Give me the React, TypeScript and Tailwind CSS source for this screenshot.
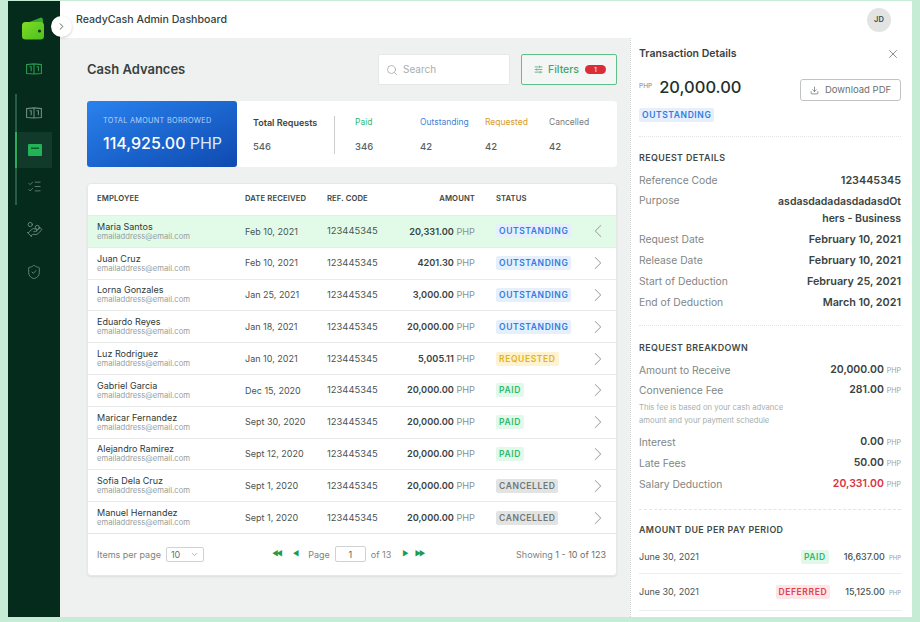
import { ChevronLeft, ChevronRight, ChevronDown, Search, SlidersHorizontal, X, Download, ListChecks, ShieldCheck, HandCoins } from "lucide-react";

type Status = "OUTSTANDING" | "REQUESTED" | "PAID" | "CANCELLED";

const statusStyles: Record<string, string> = {
  OUTSTANDING: "bg-[#e6effc] text-[#2f7de1]",
  REQUESTED: "bg-[#fdf3d0] text-[#e3b21f]",
  PAID: "bg-[#e2f8ea] text-[#2dbb68]",
  CANCELLED: "bg-[#e2e4e3] text-[#6f7674]",
  DEFERRED: "bg-[#fde6e8] text-[#e2404f]",
};

const rows: { name: string; date: string; amount: string; status: Status }[] = [
  { name: "Maria Santos", date: "Feb 10, 2021", amount: "20,331.00", status: "OUTSTANDING" },
  { name: "Juan Cruz", date: "Feb 10, 2021", amount: "4201.30", status: "OUTSTANDING" },
  { name: "Lorna Gonzales", date: "Jan 25, 2021", amount: "3,000.00", status: "OUTSTANDING" },
  { name: "Eduardo Reyes", date: "Jan 18, 2021", amount: "20,000.00", status: "OUTSTANDING" },
  { name: "Luz Rodriguez", date: "Jan 10, 2021", amount: "5,005.11", status: "REQUESTED" },
  { name: "Gabriel Garcia", date: "Dec 15, 2020", amount: "20,000.00", status: "PAID" },
  { name: "Maricar Fernandez", date: "Sept 30, 2020", amount: "20,000.00", status: "PAID" },
  { name: "Alejandro Ramirez", date: "Sept 12, 2020", amount: "20,000.00", status: "PAID" },
  { name: "Sofia Dela Cruz", date: "Sept 1, 2020", amount: "20,000.00", status: "CANCELLED" },
  { name: "Manuel Hernandez", date: "Sept 1, 2020", amount: "20,000.00", status: "CANCELLED" },
];

const stats = [
  { label: "Paid", value: "346", color: "text-[#35b86a]", width: "w-[65px]" },
  { label: "Outstanding", value: "42", color: "text-[#3f7fd8]", width: "w-[65px]" },
  { label: "Requested", value: "42", color: "text-[#d99a2b]", width: "w-[64px]" },
  { label: "Cancelled", value: "42", color: "text-[#777d7b]", width: "w-[50px]" },
];

const gridCols = "grid grid-cols-[148px_82px_70px_78px_21px_95px_15px]";

function Badge({ status, className = "" }: { status: string; className?: string }) {
  return (
    <span className={`inline-block rounded-[2px] px-[3px] text-[8.5px] leading-[14px] font-semibold tracking-[0.6px] ${statusStyles[status]} ${className}`}>
      {status}
    </span>
  );
}

function MoneyIcon({ color }: { color: string }) {
  return (
    <svg width="16" height="12" viewBox="0 0 16 12" fill="none" stroke={color} strokeWidth="1.1">
      <path d="M0.6 1.6 L8 0.9 L15.4 1.6 V10.6 L8 11 L0.6 10.6z" />
      <path d="M8 1v10" />
      <path d="M3.4 3.8h1.8v4.4M10.6 3.8h1.8v4.4" />
    </svg>
  );
}

function Logo() {
  return (
    <svg width="23" height="23" viewBox="0 0 23 23">
      <defs>
        <linearGradient id="walletBody" x1="0" y1="0" x2="1" y2="1">
          <stop offset="0" stopColor="#7fdc24" />
          <stop offset="1" stopColor="#4cc020" />
        </linearGradient>
      </defs>
      <path d="M5 6 L19 0.5 Q21 0.5 21 3 V7 H5z" fill="#37a835" />
      <rect x="0" y="5" width="22" height="17.5" rx="3.5" fill="url(#walletBody)" />
      <circle cx="17.5" cy="14" r="1.6" fill="#123a1c" />
    </svg>
  );
}

function Sidebar() {
  return (
    <aside className="relative flex w-[52px] shrink-0 flex-col items-center bg-[#042b1c]">
      <div className="mt-[16px] ml-[-1px] flex h-[23px] items-center">
        <Logo />
      </div>
      <div className="mt-[23px] flex h-[12px] items-center">
        <MoneyIcon color="#2a9a50" />
      </div>
      <div className="relative mt-[19px] flex w-full flex-col items-center">
        <div className="absolute top-0 left-[7px] h-[111px] w-[2px] bg-[#2a5c45]" />
        <div className="absolute top-[38px] left-[7px] h-[36px] w-[2px] bg-[#2bae5c]" />
        <div className="flex h-[38px] items-start pt-[13px]">
          <MoneyIcon color="#6d8d7e" />
        </div>
        <div className="ml-[1px] flex h-[36px] w-[34px] items-center justify-center bg-[#123a2a]">
          <svg width="14" height="12" viewBox="0 0 14 12">
            <rect width="14" height="12" rx="1" fill="#22b356" />
            <rect x="3" y="3.5" width="8" height="1.5" fill="#0f5a30" />
          </svg>
        </div>
        <div className="flex h-[37px] items-center">
          <ListChecks size={15} color="#6d8d7e" strokeWidth={1.3} />
        </div>
      </div>
      <div className="mt-[14px] flex h-[20px] items-center">
        <HandCoins size={17} color="#6d8d7e" strokeWidth={1.3} />
      </div>
      <div className="mt-[23px] flex h-[20px] items-center">
        <ShieldCheck size={16} color="#6d8d7e" strokeWidth={1.3} />
      </div>
      <div className="absolute top-[15px] right-[-12px] z-10 flex h-[21px] w-[21px] items-center justify-center rounded-full bg-white shadow-[0_1px_3px_rgba(0,0,0,0.2)]">
        <ChevronRight size={11} color="#555" />
      </div>
    </aside>
  );
}

function TableCard() {
  return (
    <div className="mt-[16px] overflow-hidden rounded-[4px] border border-[#e6e8e7] bg-white shadow-[0_1px_2px_rgba(0,0,0,0.08)]">
      <div className={`${gridCols} h-[31px] items-center pb-[2px] pl-[9px] text-[7.7px] font-semibold tracking-[0.1px] text-[#3b4542]`}>
        <span>EMPLOYEE</span>
        <span>DATE RECEIVED</span>
        <span>REF. CODE</span>
        <span className="text-right">AMOUNT</span>
        <span />
        <span>STATUS</span>
      </div>
      {rows.map((r, i) => (
        <div
          key={r.name}
          className={`${gridCols} h-[31.8px] items-center border-t border-[#e9ebea] pl-[9px] ${i === 0 ? "bg-[#e2fbe9]" : "bg-white"}`}
        >
          <div className="flex flex-col">
            <span className="text-[9px] leading-[11px] whitespace-nowrap text-[#2f3a37]">{r.name}</span>
            <span className="text-[7.7px] leading-[10px] text-[#98a09d]">emailaddress@email.com</span>
          </div>
          <span className="text-[9px] text-[#4a5451]">{r.date}</span>
          <span className="text-[9.4px] text-[#4a5451]">123445345</span>
          <span className="text-right text-[9.2px] whitespace-nowrap text-[#8a918e]">
            <span className="font-semibold text-[#3a4441]">{r.amount}</span> PHP
          </span>
          <span />
          <span className="flex">
            <Badge status={r.status} />
          </span>
          {i === 0 ? (
            <ChevronLeft size={22} color="#a0a6a3" strokeWidth={1.1} className="ml-[-4px]" />
          ) : (
            <ChevronRight size={22} color="#a0a6a3" strokeWidth={1.1} className="ml-[-4px]" />
          )}
        </div>
      ))}
      <div className="flex h-[42px] items-center border-t border-[#e3e5e4] pr-[10px] pl-[9px] text-[9px] text-[#7c8481]">
        <span>Items per page</span>
        <div className="ml-[5px] flex h-[15px] w-[38px] items-center justify-between rounded-[2px] border border-[#cfd3d1] pr-[4px] pl-[4px] text-[9px] text-[#6a716e]">
          10
          <ChevronDown size={9} color="#9aa09e" />
        </div>
        <div className="ml-[68px] flex items-center text-[#37ad63]">
          <span className="text-[7px] tracking-[-2px] text-[#1f9a50]">◀◀</span>
          <span className="ml-[12px] text-[7px] text-[#1f9a50]">◀</span>
          <span className="ml-[9px] text-[9px] text-[#7c8481]">Page</span>
          <span className="ml-[5px] flex h-[16px] w-[31px] items-center justify-center rounded-[2px] border border-[#cfd3d1] text-[9px] text-[#5a625f]">1</span>
          <span className="ml-[5px] text-[9px] text-[#7c8481]">of 13</span>
          <span className="ml-[11px] text-[7px] text-[#1f9a50]">▶</span>
          <span className="ml-[6px] text-[7px] tracking-[-2px] text-[#1f9a50]">▶▶</span>
        </div>
        <span className="ml-auto">
          Showing <span className="text-[#6a716e]">1 - 10 of 123</span>
        </span>
      </div>
    </div>
  );
}

function MainArea() {
  return (
    <main className="w-[570px] shrink-0 bg-[#eff1f0] pr-[13px] pl-[27px]">
      <div className="flex h-[47px] items-end pt-[16px]">
        <h1 className="mb-[6px] text-[13px] font-semibold text-[#37423f]">Cash Advances</h1>
        <div className="mb-0 ml-auto flex h-[31px] w-[132px] items-center gap-[5px] rounded-[2px] border border-[#e6e8e7] bg-white pl-[7px] text-[10px] text-[#a8aead]">
          <Search size={12} color="#9da3a1" strokeWidth={1.5} />
          Search
        </div>
        <div className="ml-[11px] flex h-[31px] w-[96px] items-center rounded-[2px] border border-[#60c08a] bg-[#f3f6f4] pl-[12px] text-[10.5px] font-medium text-[#3fa66c]">
          <SlidersHorizontal size={9} color="#3fa66c" />
          <span className="ml-[5px]">Filters</span>
          <span className="ml-[6px] flex h-[9px] w-[21px] items-center justify-center rounded-full bg-[#db2c3a] text-[6px] text-white">1</span>
        </div>
      </div>
      <div className="mt-[16px] flex h-[66px]">
        <div className="flex w-[150px] flex-col justify-center rounded-[3px] bg-gradient-to-br from-[#2a82ef] to-[#0f4ab0] pt-[3px] pl-[16px] text-white">
          <span className="text-[7.3px] tracking-[0.3px] whitespace-nowrap text-[#b5d3f8]">TOTAL AMOUNT BORROWED</span>
          <span className="mt-[5px] text-[16px] font-medium whitespace-nowrap">
            114,925.00 <span className="font-normal text-[#dbe9fb]">PHP</span>
          </span>
        </div>
        <div className="flex flex-1 items-center rounded-r-[4px] bg-white pt-[2px] pl-[16px]">
          <div className="flex h-[38px] w-[82px] flex-col justify-between border-r border-[#c9cdcb]">
            <span className="text-[9px] font-semibold text-[#3a4441]">Total Requests</span>
            <span className="text-[9.5px] font-medium text-[#5a625f]">546</span>
          </div>
          <div className="ml-[20px] flex">
            {stats.map((s) => (
              <div key={s.label} className={`flex h-[38px] flex-col justify-between ${s.width}`}>
                <span className={`text-[8.5px] ${s.color}`}>{s.label}</span>
                <span className="text-[9.5px] font-medium text-[#5a625f]">{s.value}</span>
              </div>
            ))}
          </div>
        </div>
      </div>
      <TableCard />
    </main>
  );
}

function DetailRow({ label, value }: { label: string; value: string }) {
  return (
    <div className="flex h-[21px] items-center justify-between">
      <span className="text-[10.3px] text-[#7f8784]">{label}</span>
      <span className="text-[10.8px] font-semibold text-[#3a4441]">{value}</span>
    </div>
  );
}

function MoneyRow({ label, value, red = false, className = "h-[21px]" }: { label: string; value: string; red?: boolean; className?: string }) {
  return (
    <div className={`flex items-center justify-between ${className}`}>
      <span className="text-[10.3px] text-[#7f8784]">{label}</span>
      <span className="text-[7px] text-[#9aa09e]">
        <span className={`mr-[3px] text-[10.5px] font-semibold ${red ? "text-[#dd3344]" : "text-[#3a4441]"}`}>{value}</span>PHP
      </span>
    </div>
  );
}

function SectionTitle({ children }: { children: string }) {
  return <h3 className="text-[8.9px] font-semibold tracking-[0.4px] text-[#3f4a47]">{children}</h3>;
}

function DetailsPanel() {
  return (
    <section className="flex-1 overflow-hidden border-l border-dotted border-[#cfd3d1] bg-white pr-[11px] pl-[8px]">
      <div className="flex h-[31px] items-center justify-between pt-[1px]">
        <h2 className="text-[10.5px] font-semibold text-[#37423f]">Transaction Details</h2>
        <X size={14} color="#6f7674" strokeWidth={1.4} className="mr-[1px]" />
      </div>
      <div className="mt-[10px] flex h-[22px] items-center justify-between">
        <div className="flex items-center pb-[6px]">
          <span className="mr-[7px] text-[6.5px] text-[#7f8784]">PHP</span>
          <span className="text-[16.5px] font-medium text-[#22302c]">20,000.00</span>
        </div>
        <div className="flex h-[22px] w-[101px] items-center justify-center gap-[6px] rounded-[3px] border border-[#bfc4c2] text-[9.5px] text-[#6a716e]">
          <Download size={9} color="#6a716e" />
          Download PDF
        </div>
      </div>
      <div className="mt-[7px] flex h-[14px]">
        <Badge status="OUTSTANDING" />
      </div>
      <div className="mt-[14px] border-t border-dotted border-[#e3e5e4]" />
      <div className="mt-[14px]">
        <SectionTitle>REQUEST DETAILS</SectionTitle>
      </div>
      <div className="mt-[6px]">
        <DetailRow label="Reference Code" value="123445345" />
        <div className="flex h-[38px] justify-between pt-[2px]">
          <span className="text-[10.3px] leading-[14px] text-[#7f8784]">Purpose</span>
          <span className="text-right text-[10.5px] leading-[17px] font-semibold text-[#3a4441]">
            asdasdadadasdadasdOt
            <br />
            hers - Business
          </span>
        </div>
        <DetailRow label="Request Date" value="February 10, 2021" />
        <DetailRow label="Release Date" value="February 10, 2021" />
        <DetailRow label="Start of Deduction" value="February 25, 2021" />
        <DetailRow label="End of Deduction" value="March 10, 2021" />
      </div>
      <div className="mt-[12px] border-t border-dotted border-[#e3e5e4]" />
      <div className="mt-[15px]">
        <SectionTitle>REQUEST BREAKDOWN</SectionTitle>
      </div>
      <div className="mt-[6px]">
        <MoneyRow label="Amount to Receive" value="20,000.00" className="h-[19px]" />
        <MoneyRow label="Convenience Fee" value="281.00" />
        <p className="mb-[5px] text-[7.7px] leading-[13px] text-[#a9afac]">
          This fee is based on your cash advance
          <br />
          amount and your payment schedule
        </p>
        <MoneyRow label="Interest" value="0.00" />
        <MoneyRow label="Late Fees" value="50.00" />
        <MoneyRow label="Salary Deduction" value="20,331.00" red />
      </div>
      <div className="mt-[14px] border-t border-dashed border-[#e3e5e4]" />
      <div className="mt-[13px]">
        <SectionTitle>AMOUNT DUE PER PAY PERIOD</SectionTitle>
      </div>
      <div className="mt-[5px] flex h-[33px] items-center border-b border-[#eceeed]">
        <span className="text-[9px] text-[#4a5451]">June 30, 2021</span>
        <Badge status="PAID" className="ml-auto" />
        <span className="ml-[15px] text-[9px] font-medium text-[#4a5451]">16,637.00</span>
        <span className="ml-[4px] text-[6px] text-[#9aa09e]">PHP</span>
      </div>
      <div className="flex h-[37px] items-center border-b border-[#eceeed]">
        <span className="text-[9px] text-[#4a5451]">June 30, 2021</span>
        <Badge status="DEFERRED" className="ml-auto" />
        <span className="ml-[15px] text-[9px] font-medium text-[#4a5451]">15,125.00</span>
        <span className="ml-[4px] text-[6px] text-[#9aa09e]">PHP</span>
      </div>
    </section>
  );
}

export default function App() {
  return (
    <div className="h-[622px] w-[920px] overflow-hidden bg-[#c6ecd6] pt-px pr-[8px] pb-[5px] pl-[8px] font-['Inter',sans-serif]">
      <div className="flex h-full bg-white">
        <Sidebar />
        <div className="flex min-w-0 flex-1 flex-col">
          <header className="flex h-[37px] shrink-0 items-center justify-between bg-white pr-[21px] pl-[16px]">
            <span className="text-[10.6px] font-medium text-[#37423f]">ReadyCash Admin Dashboard</span>
            <span className="flex h-[24px] w-[24px] items-center justify-center rounded-full bg-[#e2e4e3] text-[7.5px] font-semibold text-[#3f4a47]">JD</span>
          </header>
          <div className="flex min-h-0 flex-1">
            <MainArea />
            <DetailsPanel />
          </div>
        </div>
      </div>
    </div>
  );
}
